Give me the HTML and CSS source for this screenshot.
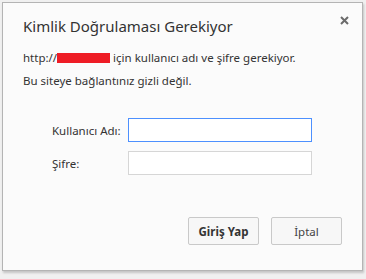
FILE: index.html
```html
<!DOCTYPE html>
<html lang="tr">
<head>
<meta charset="utf-8">
<link rel="stylesheet" href="styles.css">
</head>
<body>
<div class="dialog">
  <div class="header">
    <h1 class="title">Kimlik Doğrulaması Gerekiyor</h1>
    <span class="close">
      <svg width="9" height="9" viewBox="0 0 9 9"><path d="M1 1L8 8M8 1L1 8" stroke="#6b6b6b" stroke-width="2"/></svg>
    </span>
  </div>
  <p class="line">http://<span class="redact"></span> için kullanıcı adı ve şifre gerekiyor.</p>
  <p class="line second">Bu siteye bağlantınız gizli değil.</p>
  <div class="form">
    <label class="label">Kullanıcı Adı:</label>
    <input class="field focused" type="text">
    <label class="label">Şifre:</label>
    <input class="field" type="password">
  </div>
  <div class="actions">
    <button class="btn primary">Giriş Yap</button>
    <button class="btn">İptal</button>
  </div>
</div>
</body>
</html>
```
FILE: styles.css
```css
html, body { margin: 0; padding: 0; }
body {
  background: #f0f0f0;
  width: 366px;
  height: 279px;
  font-family: "Noto Sans", "Open Sans", sans-serif;
  color: #333;
}
.dialog {
  box-sizing: border-box;
  margin: 2px 0 0 2px;
  width: 361px;
  height: 269px;
  background: #fbfbfb;
  border: 1px solid #b4b4b4;
  box-shadow: 1px 2px 2px rgba(0,0,0,0.18);
  padding: 0 20px 0 20px;
  display: flex;
  flex-direction: column;
}
.header {
  display: flex;
  justify-content: space-between;
  align-items: flex-start;
  padding-top: 13px;
}
.title {
  margin: 0;
  font-weight: normal;
  font-size: 15px;
  line-height: 20px;
  color: #333;
}
.close {
  display: flex;
  margin-top: 0px;
  margin-right: -7px;
}
.line {
  margin: 0;
  font-size: 11.5px;
  line-height: 16px;
  color: #333;
}
.line:first-of-type { margin-top: 14px; }
.second { margin-top: 7px; }
.redact {
  display: inline-block;
  width: 53px;
  height: 10px;
  background: #ee1c25;
  vertical-align: -1px;
}
.form {
  display: grid;
  grid-template-columns: 76px 184px;
  row-gap: 9px;
  align-items: center;
  margin: 29px 0 0 29px;
}
.label {
  font-size: 11.5px;
  color: #333;
}
.field {
  box-sizing: border-box;
  width: 184px;
  height: 24px;
  margin: 0;
  border: 1px solid #d6d6d6;
  background: #fff;
  outline: none;
}
.field.focused { border-color: #4d90fe; }
.actions {
  display: flex;
  justify-content: flex-end;
  gap: 12px;
  margin-top: 42px;
}
.btn {
  box-sizing: border-box;
  width: 71px;
  height: 28px;
  border: 1px solid #c9c9c9;
  border-radius: 2px;
  background: #f7f7f7;
  font-family: inherit;
  font-size: 11.5px;
  color: #444;
  padding: 0;
}
.btn.primary { font-weight: bold; color: #333; }
```
